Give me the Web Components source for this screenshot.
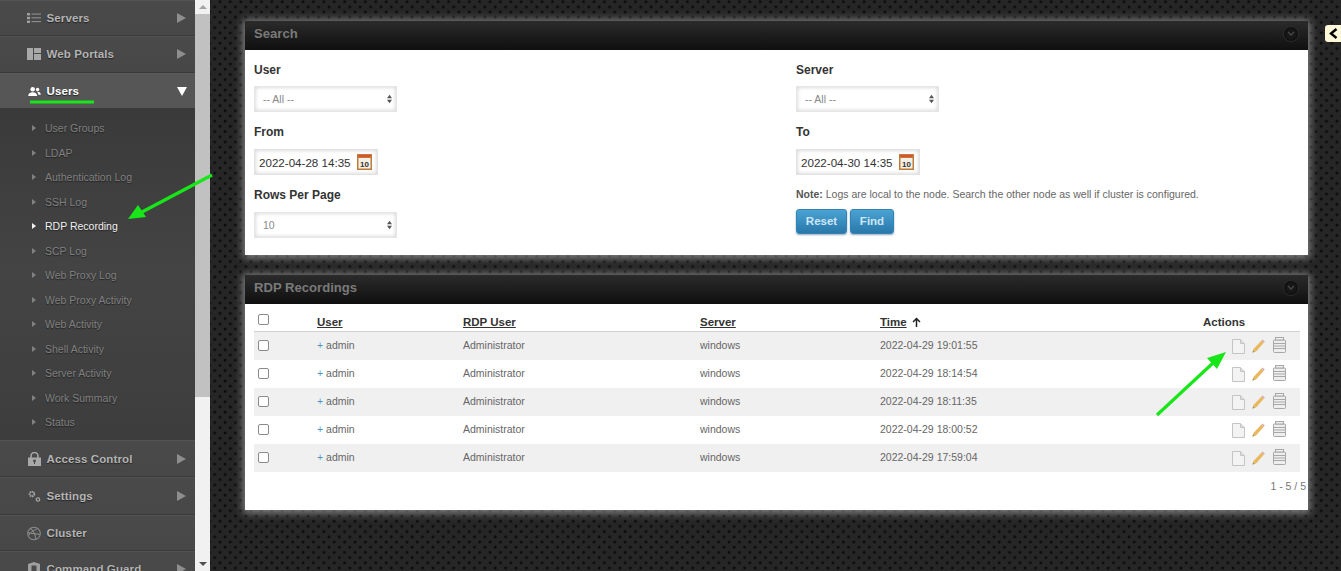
<!DOCTYPE html>
<html><head><meta charset="utf-8"><title>RDP Recording</title>
<style>
html,body{margin:0;height:571px;overflow:hidden;background:#1c1c1c;font-family:"Liberation Sans",Arial,sans-serif}
</style></head><body>
<x-app>
  <x-sidebar slot="side">
    <x-nav label="Servers" icon="list" arrow="right" h="36"></x-nav>
    <x-nav label="Web Portals" icon="portal" arrow="right" h="37" style="padding-bottom:2px"></x-nav>
    <x-nav label="Users" icon="users" arrow="down" active h="36"></x-nav>
    <x-submenu>
      <x-sub>User Groups</x-sub><x-sub>LDAP</x-sub><x-sub>Authentication Log</x-sub><x-sub>SSH Log</x-sub>
      <x-sub current>RDP Recording</x-sub><x-sub>SCP Log</x-sub><x-sub>Web Proxy Log</x-sub><x-sub>Web Proxy Activity</x-sub>
      <x-sub>Web Activity</x-sub><x-sub>Shell Activity</x-sub><x-sub>Server Activity</x-sub><x-sub>Work Summary</x-sub><x-sub>Status</x-sub>
    </x-submenu>
    <x-nav label="Access Control" icon="lock" arrow="right" h="37"></x-nav>
    <x-nav label="Settings" icon="gears" arrow="right" h="38"></x-nav>
    <x-nav label="Cluster" icon="ball" h="36"></x-nav>
    <x-nav label="Command Guard" icon="shield" arrow="right" h="36"></x-nav>
  </x-sidebar>
  <x-scrollbar slot="bar"></x-scrollbar>
  <x-panel heading="Search" h="234">
    <x-search-form></x-search-form>
  </x-panel>
  <x-panel heading="RDP Recordings" h="235">
    <x-rec-table></x-rec-table>
  </x-panel>
  <x-tab slot="over"></x-tab>
  <x-arrows slot="over"></x-arrows>
</x-app>
<script>
const icons={
list:'<svg width="14" height="10" viewBox="0 0 14 10" fill="#a0a0a0"><rect x="0" y="0" width="3" height="2.4"/><rect x="0" y="3.8" width="3" height="2.4"/><rect x="0" y="7.6" width="3" height="2.4"/><rect x="4.5" y=".6" width="9.5" height=".9"/><rect x="4.5" y="4.4" width="9.5" height=".9"/><rect x="4.5" y="8.2" width="9.5" height=".9"/></svg>',
portal:'<svg width="14" height="12" viewBox="0 0 14 12" fill="#a8a8a8"><rect x="0" y="0" width="6" height="12"/><rect x="7" y="0" width="7" height="5"/><rect x="7" y="6" width="7" height="6"/></svg>',
users:'<svg width="13" height="9" viewBox="0 0 14 10" fill="#fff"><circle cx="5" cy="2.6" r="2.5"/><path d="M0 10c0-2.8 2-4.200 5-4.200s5 1.400 5 4.200z"/><circle cx="10.400" cy="2.800" r="1.900"/><path d="M10.600 5.200c2 0 3.400 1 3.400 3.400h-2.600c-.2-1.300-.8-2.500-1.800-3.200z"/></svg>',
lock:'<svg width="13" height="14" viewBox="0 0 13 14"><path d="M3 6V4a3.500 3.500 0 0 1 7 0v2" fill="none" stroke="#a8a8a8" stroke-width="1.600"/><rect x="0" y="5.500" width="13" height="8.500" fill="#a8a8a8"/><circle cx="6.500" cy="9" r="1.400" fill="#4a4a4a"/><rect x="6" y="9" width="1" height="3" fill="#4a4a4a"/></svg>',
gears:'<svg width="13" height="13" viewBox="0 0 13 13" fill="none" stroke="#a0a0a0"><circle cx="4" cy="4" r="2.300" stroke-width="2" stroke-dasharray="1.400 .5"/><circle cx="10" cy="9.500" r="1.700" stroke-width="1.300"/></svg>',
ball:'<svg width="15" height="15" viewBox="0 0 15 15" fill="none" stroke="#8c8c8c" stroke-width="1.100"><circle cx="7.500" cy="7.500" r="6.800"/><path d="M1.500 9.500C5 5 9 3 11.500 2M4 2c3 3 5 7 5.500 12M1 6.500c4 1.500 9 1 13 2"/></svg>',
shield:'<svg width="12" height="14" viewBox="0 0 12 14"><path d="M6 0l6 2v6c0 3-3 5-6 6-3-1-6-3-6-6V2z" fill="#a0a0a0"/><rect x="3.500" y="3.500" width="5" height="5.500" fill="#4a4a4a"/></svg>'
};
function def(name,css,html,init){
  customElements.define(name,class extends HTMLElement{
    connectedCallback(){
      if(this.shadowRoot)return;
      const r=this.attachShadow({mode:'open'});
      r.innerHTML='<style>'+css+'</style>'+(typeof html==='function'?html(this):html);
      if(init)init(this,r);
    }
  });
}
def('x-app',`:host{display:grid;grid-template-columns:195px 15px 1fr;height:571px;overflow:hidden;position:relative;
  background-color:#262626;
  background-image:radial-gradient(circle at 2px 2px,#0b0b0b 1px,transparent 1.800px),radial-gradient(circle at 2px 2px,#0b0b0b 1px,transparent 1.800px);
  background-size:10.400px 10.400px;background-position:-.3px -.3px,4.900px 4.900px}
main{grid-column:3;display:flex;flex-direction:column;gap:20px;padding:21px 33px 0 35px;min-width:0}`,
`<slot name="side"></slot><slot name="bar"></slot><main><slot></slot></main><slot name="over"></slot>`);
def('x-sidebar',`:host{display:flex;flex-direction:column;background:#484848;height:571px;overflow:hidden}`,`<slot></slot>`);
def('x-nav',`:host{display:flex;align-items:center;box-sizing:border-box;background:linear-gradient(#4a4a4a,#474747);border-bottom:1px solid #3a3a3a;border-top:1px solid #525252;flex:none;position:relative;color:#b4b4b4;font:bold 11.500px "Liberation Sans",sans-serif;letter-spacing:.01em;text-shadow:0 1px 1px #222}
:host([active]){background:#565656;color:#fff;border-top-color:#5a5a5a}
.i{width:14px;margin:0 5.500px 0 27px;display:flex;justify-content:center;flex:none}
.l{flex:1;white-space:nowrap}
.a{width:0;height:0;border-left:9px solid #8e8e8e;border-top:5px solid transparent;border-bottom:5px solid transparent;margin-right:9px;flex:none}
.a.down{border:solid transparent;border-width:9px 5px 0;border-top-color:#fff;margin-right:8px}`,
(e)=>{e.style.height=e.getAttribute('h')+'px';const a=e.getAttribute('arrow');
return `<span class="i">${icons[e.getAttribute('icon')]}</span><span class="l">${e.getAttribute('label')}</span>${a?`<span class="a ${a}"></span>`:''}`});
def('x-submenu',`:host{display:flex;flex-direction:column;padding:7px 0 6px;background:linear-gradient(#3a3a3a,#444 50%,#3d3d3d);flex:none;height:331px;box-sizing:border-box}`,`<slot></slot>`);
def('x-sub',`:host{display:flex;align-items:center;height:24.500px;flex:none;color:#818181;font:10.500px "Liberation Sans",sans-serif;text-shadow:0 1px 1px #222}
:host([current]){color:#f2f2f2}
.t{width:0;height:0;border-left:4px solid currentColor;border-top:3px solid transparent;border-bottom:3px solid transparent;margin:0 9px 0 32px}`,
`<span class="t"></span><slot></slot>`);
def('x-scrollbar',`:host{display:flex;flex-direction:column;background:#f1f1f1;height:571px;align-items:stretch}
.b{height:14px;display:flex;align-items:center;justify-content:center;flex:none}
.thumb{height:383px;background:#c1c1c1;flex:none}
.g{flex:1}
.u{border:solid transparent;border-width:0 4px 4px;border-bottom-color:#a3a3a3}
.d{border:solid transparent;border-width:4px 4px 0;border-top-color:#505050}`,
`<div class="b"><i class="u"></i></div><div class="thumb"></div><div class="g"></div><div class="b"><i class="d"></i></div>`);
def('x-panel',`:host{display:block;flex:none;background:#fff;box-shadow:0 1px 8px 2px rgba(185,185,185,.65);box-sizing:border-box;position:relative}
header{height:29px;box-sizing:border-box;background:linear-gradient(#2b2b2b,#0f0f0f);display:flex;align-items:center;justify-content:space-between;padding:0 9px 4px 9px;color:#7a7a7a;font:bold 13.100px "Liberation Sans",sans-serif}
.c{width:16px;height:16px;box-sizing:border-box;border-radius:50%;background:#181818;border:1px solid #2c2c2c;box-shadow:inset 0 0 3px #000;display:flex;align-items:center;justify-content:center}`,
(e)=>{e.style.height=e.getAttribute('h')+'px';return `<header><span>${e.getAttribute('heading')}</span><span class="c"><svg width="8" height="6" viewBox="0 0 8 6"><path d="M1 1l3 3 3-3" fill="none" stroke="#484848" stroke-width="1.300"/></svg></span></header><slot></slot>`});
def('x-select',`:host{display:flex;box-sizing:border-box;width:143px;height:26px;align-items:center;justify-content:space-between;padding:0 4px 0 8px;background:#fff;border:1px solid #e6e6e6;box-shadow:inset 0 0 4px #ccc;color:#888;font:10.500px "Liberation Sans",sans-serif}
svg{flex:none}`,
`<slot></slot><svg width="5" height="10" viewBox="0 0 6 10" fill="#555"><path d="M3 0l3 4H0zM3 10L0 6h6z"/></svg>`);
def('x-date',`:host{display:flex;box-sizing:border-box;width:124px;height:26px;align-items:center;gap:6px;padding:0 5px 0 4px;background:#fff;border:1px solid #e2e2e2;box-shadow:inset 0 0 4px #ccc;color:#333;font:11.600px "Liberation Sans",sans-serif;white-space:nowrap}`,
`<slot></slot><svg width="15" height="16" viewBox="0 0 15 16"><rect width="15" height="16" fill="#c07a3c"/><rect x="1.500" y="4" width="12" height="10.500" fill="#f4f0e4"/><rect x="1.500" y="1" width="12" height="2" fill="#d9522c"/><text x="7.500" y="13" font-family="Liberation Sans" font-size="8" font-weight="bold" text-anchor="middle" fill="#333">10</text></svg>`);
def('x-field',`:host{display:flex;flex-direction:column;align-items:flex-start;gap:var(--g,9px)}
label{font:bold 12px "Liberation Sans",sans-serif;color:#333;height:14px;line-height:14px}`,
(e)=>`<label>${e.getAttribute('label')}</label><slot></slot>`);
def('x-btn',`:host{display:flex;align-items:center;justify-content:center;height:25px;box-sizing:border-box;padding-bottom:1px;border-radius:3px;background:linear-gradient(#49a3d3,#2a78ab);color:#cfe6f4;font:bold 11.500px "Liberation Sans",sans-serif;box-shadow:0 1px 2px #8fa8b8;border:1px solid #3483b5}`,`<slot></slot>`);
def('x-search-form',`:host{display:grid;grid-template-columns:542px 1fr;padding:13px 9px 0}
.col{display:flex;flex-direction:column;gap:13px}
.col>x-field:nth-child(2),.col>x-field:nth-child(3){--g:10px}
.note{font:10.500px "Liberation Sans",sans-serif;color:#666;margin:0;line-height:13px}
.note b{color:#555}
.btns{display:flex;gap:3px;margin-top:-5px}
x-btn.r{width:51px}x-btn.f{width:44px}`,
`<div class="col"><x-field label="User"><x-select>-- All --</x-select></x-field><x-field label="From"><x-date>2022-04-28 14:35</x-date></x-field><x-field label="Rows Per Page"><x-select>10</x-select></x-field></div>
<div class="col"><x-field label="Server"><x-select>-- All --</x-select></x-field><x-field label="To"><x-date>2022-04-30 14:35</x-date></x-field><p class="note"><b>Note:</b> Logs are local to the node. Search the other node as well if cluster is configured.</p><div class="btns"><x-btn class="r">Reset</x-btn><x-btn class="f">Find</x-btn></div></div>`);
const rows=['19:01:55','18:14:54','18:11:35','18:00:52','17:59:04'];
const A={doc:'<svg width="13" height="15" viewBox="0 0 13 15"><path d="M.5.5h8l4 4v10H.5z" fill="#f3f3f3" stroke="#c4c4c4"/><path d="M8.500.5v4h4" fill="#ddd" stroke="#c4c4c4"/></svg>',
pen:'<svg width="13" height="14" viewBox="0 0 13 14"><path d="M9.500 1.500l2.500 2L4 12.500l-3.500 1 1-3.500z" fill="#e8b860"/><path d="M9.500 1.500l1-1 2.300 2-.8 1z" fill="#d8a8c0"/><path d="M.5 13.500l.5-2 1.500 1.500z" fill="#886"/></svg>',
bin:'<svg width="13" height="16" viewBox="0 0 13 16" fill="#eee" stroke="#a8a8a8"><rect x=".5" y="3" width="12" height="12.500" rx="1"/><rect x="2.500" y=".5" width="8" height="2.500"/><path d="M.5 6.500h12M.5 9h12M.5 11.500h12" fill="none"/></svg>'};
def('x-rec-table',`:host{display:block;padding:6px 8px 0 9px;font:10.500px "Liberation Sans",sans-serif;color:#666}
.r{display:grid;grid-template-columns:63px 146px 237px 180px 1fr 97px;align-items:center;height:28px;box-sizing:border-box;padding-bottom:2px}
.h{height:22px;border-bottom:1px solid #cfcfcf;color:#333;font:bold 11.500px "Liberation Sans",sans-serif;padding:2px 0 0;box-sizing:border-box}
.h span{text-decoration:underline}
.h span.n{text-decoration:none}
.tm{display:flex;align-items:center;gap:5px}
.alt{background:#f0f0f0}
.cb{width:11px;height:11px;border:1px solid #8a8a8a;border-radius:2px;background:#fff;margin-left:4px;box-sizing:border-box;display:block}
.h .cb{margin-top:-4px}
.p{color:#4d97c8}
.act{display:flex;align-items:center;gap:8px;padding-left:29px;margin-top:2px}
.act svg:nth-child(2){margin-left:-1px}
.act svg:last-child{margin-top:-3px}
.foot{text-align:right;padding:8px 0 0;margin-right:-6px;color:#777}`,
`<div class="r h"><i class="cb"></i><span>User</span><span>RDP User</span><span>Server</span><div class="tm"><span>Time</span><svg width="9" height="10" viewBox="0 0 9 10"><path d="M4.500 10V1.500M1 5l3.500-3.500L8 5" fill="none" stroke="#222" stroke-width="1.500"/></svg></div><span class="n">Actions</span></div>`+
rows.map((t,i)=>`<div class="r ${i%2?'':'alt'}"><i class="cb"></i><div><span class="p">+</span> admin</div><div>Administrator</div><div>windows</div><div>2022-04-29 ${t}</div><div class="act">${A.doc}${A.pen}${A.bin}</div></div>`).join('')+
`<div class="foot">1 - 5 / 5</div>`);
def('x-tab',`:host{position:absolute;left:1325px;top:25px;width:16px;height:17px;background:#fdf8d8;border-radius:3px 0 0 3px;display:flex;align-items:center;justify-content:center}`,
`<svg width="9" height="11" viewBox="0 0 9 11"><path d="M7.500 1L2 5.500 7.500 10" fill="none" stroke="#000" stroke-width="2.400"/></svg>`);
def('x-arrows',`:host{position:absolute;left:0;top:0;width:1341px;height:571px;pointer-events:none}svg{display:block}`,
`<svg width="1341" height="571" viewBox="0 0 1341 571">
<path d="M30 102H94" stroke="#19e619" stroke-width="3"/>
<path d="M212 175L142 212" stroke="#19e619" stroke-width="3.200"/><path d="M128 219L138 205 146 217z" fill="#19e619"/>
<path d="M1157 415L1213 363" stroke="#19e619" stroke-width="3.200"/><path d="M1226 352L1207 358 1217 369z" fill="#19e619"/>
</svg>`);
</script>
</body></html>
